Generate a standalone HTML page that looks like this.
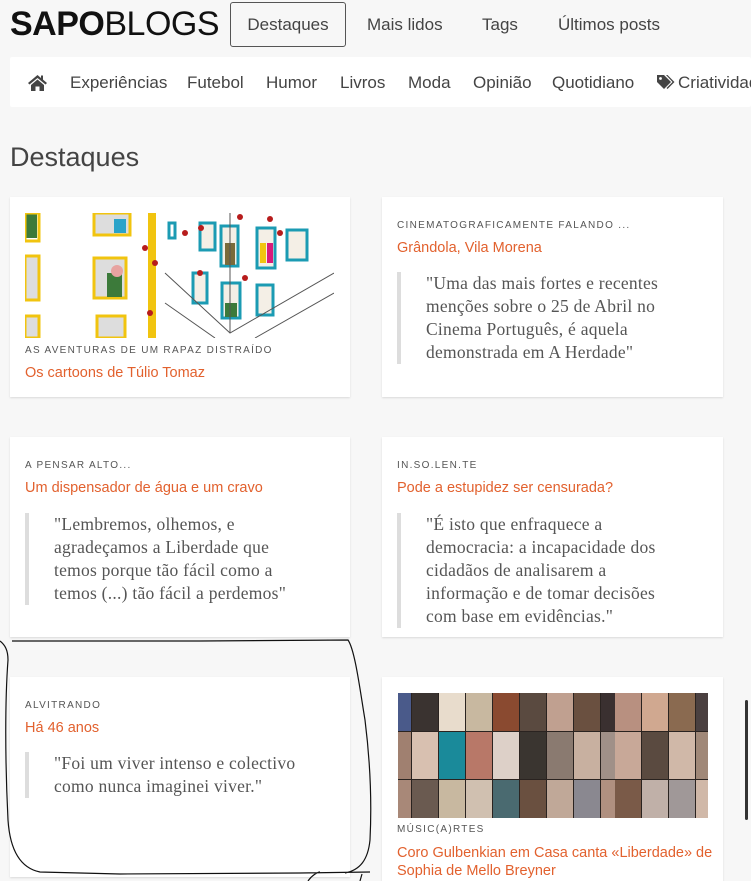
<!DOCTYPE html>
<html><head><meta charset="utf-8"><style>
*{margin:0;padding:0;box-sizing:border-box}
body{width:751px;height:881px;overflow:hidden;background:#f7f7f7;font-family:"Liberation Sans",sans-serif;position:relative;color:#333}
.abs{position:absolute}
.logo{left:10px;top:4px;font-size:34px;letter-spacing:-0.5px;color:#111;line-height:40px}
.logo b{font-weight:900}
.logo span{font-weight:300}
.top{top:15px;font-size:17px;color:#444}
.btn{left:230px;top:2px;width:116px;height:45px;border:1px solid #555;border-radius:3px;text-align:center;line-height:43px;font-size:17px;color:#444}
.nav{left:10px;top:57px;width:741px;height:50px;background:#fff;border-radius:2px}
.nav span{position:absolute;top:16px;font-size:17px;color:#444;white-space:nowrap}
h1{position:absolute;left:10px;top:142px;font-size:27px;font-weight:normal;color:#444}
.card{position:absolute;background:#fff;box-shadow:0 1px 2px rgba(0,0,0,.12)}
.cat{position:absolute;left:15px;font-size:10px;letter-spacing:1.3px;color:#555}
.tit{position:absolute;left:15px;font-size:14.5px;color:#e2612e;line-height:18px}
.q{position:absolute;left:15px;border-left:4px solid #ddd;padding-left:25px;font-family:"Liberation Serif",serif;font-size:17.5px;letter-spacing:0.25px;line-height:23px;color:#555}
</style></head><body>
<div class="abs logo"><b>SAPO</b><span>BLOGS</span></div>
<div class="abs btn">Destaques</div>
<div class="abs top" style="left:367px">Mais lidos</div>
<div class="abs top" style="left:482px">Tags</div>
<div class="abs top" style="left:558px">Últimos posts</div>
<div class="abs nav">
<svg style="position:absolute;left:17px;top:17px" width="21" height="17" viewBox="0 0 21 17"><path d="M10.5 1 L1 9 L2.5 10.5 L10.5 4 L18.5 10.5 L20 9 L16 5.6 V1.5 H14 V4 Z" fill="#444"/><path d="M4 11 L10.5 5.5 L17 11 V17 H12.5 V12.5 H8.5 V17 H4 Z" fill="#444"/></svg>
<span style="left:60px">Experiências</span>
<span style="left:177px">Futebol</span>
<span style="left:256px">Humor</span>
<span style="left:330px">Livros</span>
<span style="left:398px">Moda</span>
<span style="left:463px">Opinião</span>
<span style="left:542px">Quotidiano</span>
<svg style="position:absolute;left:646px;top:17px" width="19" height="17" viewBox="0 0 19 17"><path d="M1 1 H8 L15 8 L8 15 L1 8 Z" fill="#444"/><circle cx="4.5" cy="4.5" r="1.4" fill="#fff"/><path d="M10 1 H11.5 L18.5 8 L11.5 15 L10.5 14 L16.5 8 Z" fill="#444"/></svg>
<span style="left:668px">Criatividade</span>
</div>
<h1>Destaques</h1>

<div class="card" style="left:10px;top:197px;width:340px;height:200px">
<svg style="position:absolute;left:15px;top:16px" width="309" height="125" viewBox="0 0 309 125">
<rect width="309" height="125" fill="#fff"/>
<rect x="0" y="0" width="12" height="25" fill="#3c7a3a"/><rect x="0" y="0" width="14" height="28" fill="none" stroke="#f1c40f" stroke-width="3"/>
<rect x="69" y="0" width="36" height="22" fill="#ddd" stroke="#f1c40f" stroke-width="3"/><rect x="89" y="6" width="12" height="14" fill="#2aa3c9"/>
<rect x="0" y="43" width="14" height="44" fill="#ddd" stroke="#f1c40f" stroke-width="3"/>
<rect x="69" y="45" width="32" height="40" fill="#ddd" stroke="#f1c40f" stroke-width="3"/><rect x="82" y="60" width="15" height="24" fill="#3c7a3a"/><circle cx="92" cy="58" r="6" fill="#e7a3a0"/>
<rect x="0" y="103" width="14" height="22" fill="#ddd" stroke="#f1c40f" stroke-width="3"/>
<rect x="72" y="103" width="28" height="22" fill="#ddd" stroke="#f1c40f" stroke-width="3"/>
<rect x="123" y="0" width="8" height="125" fill="#f1c40f"/>
<rect x="144" y="10" width="6" height="15" fill="none" stroke="#1b9bb3" stroke-width="3"/>
<rect x="175" y="10" width="15" height="27" fill="#f4efe6" stroke="#1b9bb3" stroke-width="3"/>
<rect x="196" y="13" width="17" height="40" fill="#f4efe6" stroke="#1b9bb3" stroke-width="3"/><rect x="200" y="30" width="10" height="22" fill="#7a6a3a"/>
<rect x="232" y="15" width="18" height="40" fill="#f4efe6" stroke="#1b9bb3" stroke-width="3"/><rect x="235" y="30" width="6" height="20" fill="#f1c40f"/><rect x="242" y="30" width="6" height="20" fill="#d81b7a"/>
<rect x="262" y="17" width="20" height="30" fill="#f4efe6" stroke="#1b9bb3" stroke-width="3"/>
<rect x="168" y="60" width="14" height="30" fill="#f4efe6" stroke="#1b9bb3" stroke-width="3"/>
<rect x="197" y="70" width="18" height="35" fill="#f4efe6" stroke="#1b9bb3" stroke-width="3"/><rect x="200" y="90" width="12" height="14" fill="#3c7a3a"/>
<rect x="232" y="72" width="16" height="30" fill="#f4efe6" stroke="#1b9bb3" stroke-width="3"/>
<path d="M140 60 L205 120 L309 60 M205 0 V120 M140 90 L190 125 M230 125 L309 80" stroke="#555" fill="none"/>
<g fill="#b71c1c"><circle cx="120" cy="35" r="3"/><circle cx="130" cy="50" r="3"/><circle cx="125" cy="100" r="3"/><circle cx="160" cy="20" r="3"/><circle cx="176" cy="15" r="3"/><circle cx="215" cy="4" r="3"/><circle cx="245" cy="6" r="3"/><circle cx="255" cy="20" r="3"/><circle cx="175" cy="60" r="3"/><circle cx="220" cy="65" r="3"/></g>
</svg>
<div class="cat" style="top:148px">AS AVENTURAS DE UM RAPAZ DISTRAÍDO</div>
<div class="tit" style="top:167px">Os cartoons de Túlio Tomaz</div>
</div>

<div class="card" style="left:382px;top:197px;width:341px;height:200px">
<div class="cat" style="top:23px">CINEMATOGRAFICAMENTE FALANDO ...</div>
<div class="tit" style="top:42px">Grândola, Vila Morena</div>
<div class="q" style="top:75px;width:290px">"Uma das mais fortes e recentes menções sobre o 25 de Abril no Cinema Português, é aquela demonstrada em A Herdade"</div>
</div>

<div class="card" style="left:10px;top:437px;width:340px;height:200px">
<div class="cat" style="top:23px">A PENSAR ALTO...</div>
<div class="tit" style="top:42px">Um dispensador de água e um cravo</div>
<div class="q" style="top:76px;width:290px">"Lembremos, olhemos, e agradeçamos a Liberdade que temos porque tão fácil como a temos (...) tão fácil a perdemos"</div>
</div>

<div class="card" style="left:382px;top:437px;width:341px;height:200px">
<div class="cat" style="top:23px">IN.SO.LEN.TE</div>
<div class="tit" style="top:42px">Pode a estupidez ser censurada?</div>
<div class="q" style="top:76px;width:290px">"É isto que enfraquece a democracia: a incapacidade dos cidadãos de analisarem a informação e de tomar decisões com base em evidências."</div>
</div>

<div class="card" style="left:10px;top:677px;width:340px;height:200px">
<div class="cat" style="top:23px">ALVITRANDO</div>
<div class="tit" style="top:42px">Há 46 anos</div>
<div class="q" style="top:75px;width:290px">"Foi um viver intenso e colectivo como nunca imaginei viver."</div>
</div>

<div class="card" style="left:382px;top:677px;width:341px;height:204px">
<svg style="position:absolute;left:16px;top:16px" width="310" height="125" viewBox="0 0 310 125">
<rect width="310" height="125" fill="#2a2320"/>
<g>
<rect x="0" y="0" width="13" height="38" fill="#4a5a8a"/><rect x="14" y="0" width="26" height="38" fill="#3a3330"/><rect x="41" y="0" width="26" height="38" fill="#e8dccc"/><rect x="68" y="0" width="26" height="38" fill="#c8b8a0"/><rect x="95" y="0" width="26" height="38" fill="#8a4a30"/><rect x="122" y="0" width="26" height="38" fill="#5a4a40"/><rect x="149" y="0" width="26" height="38" fill="#c0a090"/><rect x="176" y="0" width="26" height="38" fill="#6a5040"/><rect x="203" y="0" width="14" height="38" fill="#3a3030"/>
<rect x="0" y="39" width="13" height="47" fill="#a08070"/><rect x="14" y="39" width="26" height="47" fill="#d8c0b0"/><rect x="41" y="39" width="26" height="47" fill="#1a8a9a"/><rect x="68" y="39" width="26" height="47" fill="#b87868"/><rect x="95" y="39" width="26" height="47" fill="#ddd0c8"/><rect x="122" y="39" width="26" height="47" fill="#3a3530"/><rect x="149" y="39" width="26" height="47" fill="#8a7a70"/><rect x="176" y="39" width="26" height="47" fill="#c8b0a0"/><rect x="203" y="39" width="14" height="47" fill="#a09088"/>
<rect x="0" y="87" width="13" height="38" fill="#a88878"/><rect x="14" y="87" width="26" height="38" fill="#6a5a50"/><rect x="41" y="87" width="26" height="38" fill="#c8b8a0"/><rect x="68" y="87" width="26" height="38" fill="#d0c0b0"/><rect x="95" y="87" width="26" height="38" fill="#4a6a70"/><rect x="122" y="87" width="26" height="38" fill="#6a5040"/><rect x="149" y="87" width="26" height="38" fill="#c0a898"/><rect x="176" y="87" width="26" height="38" fill="#8a8890"/><rect x="203" y="87" width="14" height="38" fill="#b09080"/>
</g>
<g transform="translate(217,0)">
<rect x="0" y="0" width="26" height="38" fill="#b89080"/><rect x="27" y="0" width="26" height="38" fill="#d0a890"/><rect x="54" y="0" width="26" height="38" fill="#8a6a50"/><rect x="81" y="0" width="12" height="38" fill="#4a4040"/>
<rect x="0" y="39" width="26" height="47" fill="#c8a898"/><rect x="27" y="39" width="26" height="47" fill="#5a4a40"/><rect x="54" y="39" width="26" height="47" fill="#d0b8a8"/><rect x="81" y="39" width="12" height="47" fill="#a08878"/>
<rect x="0" y="87" width="26" height="38" fill="#7a5a48"/><rect x="27" y="87" width="26" height="38" fill="#c0b0a8"/><rect x="54" y="87" width="26" height="38" fill="#a09898"/><rect x="81" y="87" width="12" height="38" fill="#d0b8a8"/>
</g>
</svg>
<div class="cat" style="top:147px">MÚSIC(A)RTES</div>
<div class="tit" style="top:167px;width:320px">Coro Gulbenkian em Casa canta «Liberdade» de Sophia de Mello Breyner</div>
</div>

<div class="abs" style="left:745px;top:700px;width:3px;height:120px;background:#333;border-radius:2px"></div>
<svg class="abs" style="left:0;top:0" width="751" height="881"><path d="M0 641 C5 645 8 650 8 660 C5 700 5 760 8 820 C10 850 20 868 40 872 L120 874 L300 873 L370 872 M12 641 L200 641 L348 640 C355 650 360 690 365 720 C370 760 372 800 370 840 C368 860 360 870 345 873 M308 881 C312 875 318 872 320 872 M360 881 L362 874" stroke="#111" stroke-width="1.2" fill="none"/></svg>
</body></html>
